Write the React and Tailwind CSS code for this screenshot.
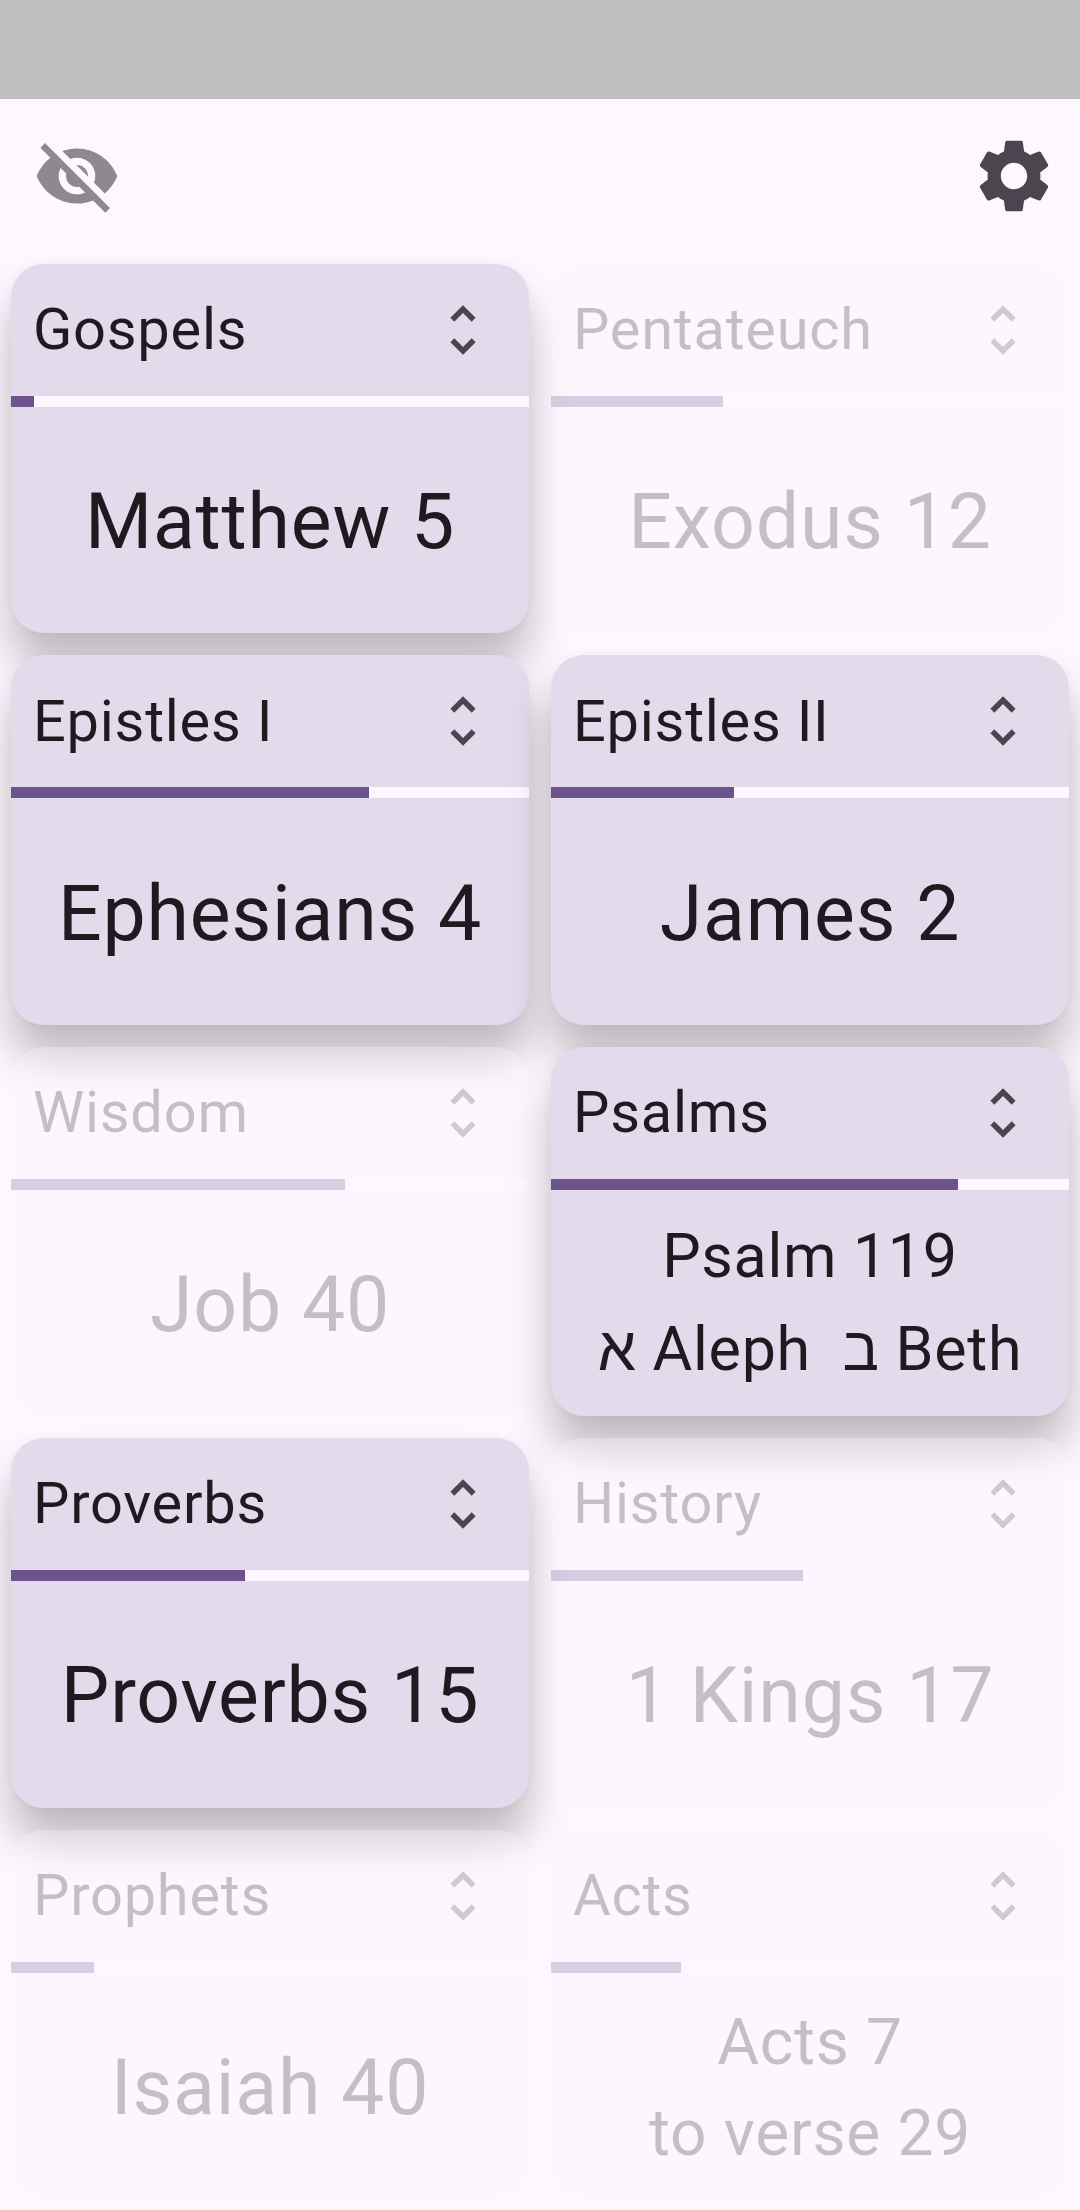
const PLANS = [
  { name: "Gospels", lines: ["Matthew 5"], done: 4 / 89, active: true },
  { name: "Pentateuch", lines: ["Exodus 12"], done: 62 / 187 },
  { name: "Epistles I", lines: ["Ephesians 4"], done: 0.692, active: true },
  { name: "Epistles II", lines: ["James 2"], done: 0.354, active: true },
  { name: "Wisdom", lines: ["Job 40"], done: 0.6455 },
  { name: "Psalms", lines: ["Psalm 119", "א\u200e Aleph\u00a0 ב\u200e Beth"], done: 118 / 150, active: true, text: "text-[61px] leading-[93px] tracking-[0.6875px]" },
  { name: "Proverbs", lines: ["Proverbs 15"], done: 14 / 31, active: true },
  { name: "History", lines: ["1 Kings 17"], done: 0.486 },
  { name: "Prophets", lines: ["Isaiah 40"], done: 0.16 },
  { name: "Acts", lines: ["Acts 7", "to verse 29"], done: 0.25, text: "text-[64.2px] leading-[91px] pt-[4px] tracking-[0.6875px]" },
];

function Icon({ d, className }) {
  return (
    <svg viewBox="0 0 24 24" fill="currentColor" className={className}>
      <path d={d} />
    </svg>
  );
}

const EYE_OFF =
  "M12 7c2.76 0 5 2.24 5 5 0 .65-.13 1.26-.36 1.83l2.92 2.92c1.51-1.26 2.7-2.89 3.43-4.75-1.73-4.39-6-7.5-11-7.5-1.4 0-2.74.25-3.98.7l2.16 2.16C10.74 7.13 11.35 7 12 7zM2 4.27l2.28 2.28.46.46C3.08 8.3 1.78 10.02 1 12c1.73 4.39 6 7.5 11 7.5 1.55 0 3.03-.3 4.38-.84l.42.42L19.73 22 21 20.73 3.27 3 2 4.27zM7.53 9.8l1.55 1.55c-.05.21-.08.43-.08.65 0 1.66 1.34 3 3 3 .22 0 .44-.03.65-.08l1.55 1.55c-.67.33-1.41.53-2.2.53-2.76 0-5-2.24-5-5 0-.79.2-1.53.53-2.2zm4.31-.78l3.15 3.15.02-.16c0-1.66-1.34-3-3-3l-.17.01z";
const GEAR =
  "M19.14 12.94c.04-.3.06-.61.06-.94 0-.32-.02-.64-.07-.94l2.03-1.58c.18-.14.23-.41.12-.61l-1.92-3.32c-.12-.22-.37-.29-.59-.22l-2.39.96c-.5-.38-1.03-.7-1.62-.94l-.36-2.54c-.04-.24-.24-.41-.48-.41h-3.84c-.24 0-.43.17-.47.41l-.36 2.54c-.59.24-1.13.57-1.62.94l-2.39-.96c-.22-.08-.47 0-.59.22L2.74 8.87c-.12.21-.08.47.12.61l2.03 1.58c-.05.3-.09.63-.09.94s.02.64.07.94l-2.03 1.58c-.18.14-.23.41-.12.61l1.92 3.32c.12.22.37.29.59.22l2.39-.96c.5.38 1.03.7 1.62.94l.36 2.54c.05.24.24.41.48.41h3.84c.24 0 .44-.17.47-.41l.36-2.54c.59-.24 1.13-.56 1.62-.94l2.39.96c.22.08.47 0 .59-.22l1.92-3.32c.12-.22.07-.47-.12-.61l-2.01-1.58zM12 15.6c-1.98 0-3.6-1.62-3.6-3.6s1.62-3.6 3.6-3.6 3.6 1.62 3.6 3.6-1.62 3.6-3.6 3.6z";
const UNFOLD =
  "M12 5.83L15.17 9l1.41-1.41L12 3 7.41 7.59 8.83 9 12 5.83zm0 12.34L8.83 15l-1.41 1.41L12 21l4.59-4.59L15.17 15 12 18.17z";

function PlanCard({ plan }) {
  const { name, lines, done, active, text } = plan;
  return (
    <section
      className={
        active
          ? "flex flex-col overflow-hidden rounded-[33px] bg-[#e3daec] shadow-[0_33px_44px_rgba(0,0,0,0.25),0_0_11px_rgba(0,0,0,0.03)]"
          : "flex flex-col overflow-hidden rounded-[33px] bg-[#f9f5fc]/35"
      }
    >
      <div className={active ? "flex min-h-0 flex-1 flex-col" : "flex min-h-0 flex-1 flex-col opacity-25"}>
        <header className="flex h-[132px] shrink-0 items-center justify-between pr-[33px] pl-[22px]">
          <h2 className="text-[57.75px] leading-none tracking-[0.76px]">{name}</h2>
          <Icon d={UNFOLD} className="size-[66px] text-[#4a454e]" />
        </header>
        <div className="h-[11px] shrink-0 bg-[#fef7ff]">
          <div className="h-full bg-[#6c538b]" style={{ width: `${done * 100}%` }} />
        </div>
        <div
          className={`flex min-h-0 flex-1 flex-col items-center justify-center whitespace-pre ${text || "pt-[5px] text-[77px] leading-[115px] tracking-[0.8px]"}`}
        >
          {lines.map((line) => (
            <p key={line}>{line}</p>
          ))}
        </div>
      </div>
    </section>
  );
}

export default function App() {
  return (
    <div className="flex h-[2210px] w-[1080px] flex-col overflow-hidden bg-[#fef7ff] font-[Roboto,'Noto_Sans',sans-serif] text-[#1d1b20]">
      <div className="h-[99px] shrink-0 bg-[#bfbfbf]" />
      <nav className="flex h-[154px] shrink-0 items-center justify-between pr-[22px] pl-[33px]">
        <Icon d={EYE_OFF} className="size-[88px] text-[#1d1b20]/50" />
        <Icon d={GEAR} className="size-[88px] text-[#4a454e]" />
      </nav>
      <main className="grid min-h-0 flex-1 grid-cols-2 grid-rows-5 gap-[22px] p-[11px]">
        {PLANS.map((plan) => (
          <PlanCard key={plan.name} plan={plan} />
        ))}
      </main>
    </div>
  );
}
